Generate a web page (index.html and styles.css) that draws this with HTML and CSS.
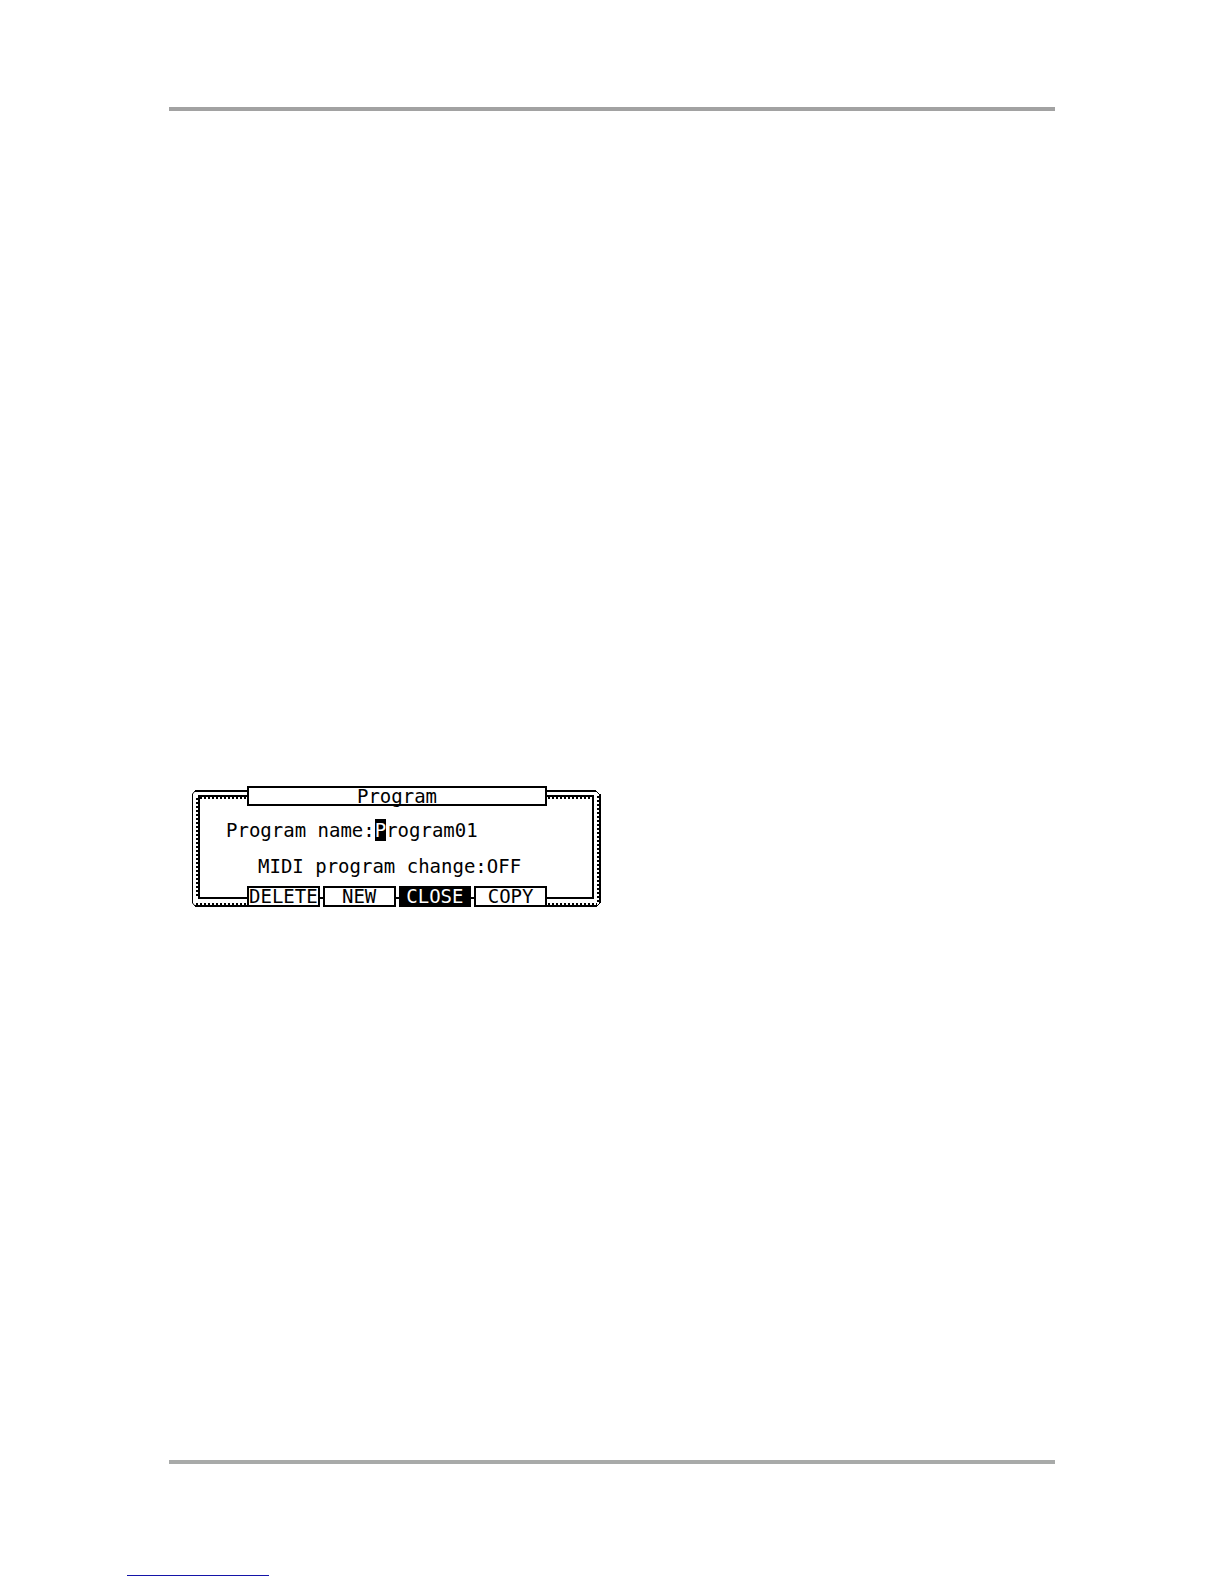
FILE: index.html
```
<!DOCTYPE html>
<html lang="en">
<head>
    <meta charset="UTF-8">
    <meta name="viewport" content="width=device-width, initial-scale=1.0">
    <title>Program</title>
    <link rel="stylesheet" href="styles.css">
</head>
<body>
    <div class="page">
        <main class="sheet">
            <form class="screen">
                <!-- double LCD frame with a toothed shadow -->
                <svg class="frame" viewBox="0 0 409 121" aria-hidden="true">
                    <path class="thin" d="M3 120L0.5 117V8L3 5M404 5L408 9M408 117L405 120"/>
                    <path class="line" d="M3 5H404M408 8V117M405 120H3"/>
                    <path class="line" d="M7 112V10H401V112Z"/>
                    <path class="teeth" d="M5 12V112M8 12H400M406 10V117M4 118H405"/>
                </svg>
                <div class="content">
                    <h1 class="title">Program</h1>
                    <div class="fields">
                        <div class="field">
                            <label for="program-name">Program name:</label>
                            <input type="text" id="program-name" value="Program01" maxlength="16" spellcheck="false" autocomplete="off">
                        </div>
                        <div class="field midi">
                            <label for="program-change">MIDI program change:</label>
                            <select id="program-change">
                                <option>OFF</option>
                            </select>
                        </div>
                    </div>
                    <div class="buttons">
                        <button type="button">DELETE</button>
                        <button type="button">NEW</button>
                        <button type="button" class="active">CLOSE</button>
                        <button type="button">COPY</button>
                    </div>
                </div>
            </form>
        </main>
        <footer class="footer">
            <div class="footer-line"></div>
        </footer>
    </div>

    <script>
        // Put the block cursor on the first character of the name
        const nameInput = document.getElementById('program-name');
        nameInput.focus();
        nameInput.setSelectionRange(0, 1);
    </script>
</body>
</html>
```
FILE: styles.css
```
* {
    box-sizing: border-box;
}
body {
    margin: 0;
    background-color: white;
    color: black;
    font-family: "DejaVu Sans Mono", monospace;
    font-size: 19px;
    line-height: 22px;
}
.page {
    display: flex;
    flex-direction: column;
    min-height: 100vh;
    padding-top: 107px;
}
.sheet {
    flex: 1;
    margin: 0 169px;
    padding: 675px 23px 0;
    border-top: 4px solid #a2a2a2;
    border-bottom: 4px solid #a8aaa9;
}
.screen {
    display: grid;
    grid-template-columns: minmax(0, 1fr);
    max-width: 409px;
}
.frame,
.content {
    grid-area: 1 / 1;
}
.frame {
    width: 100%;
    fill: none;
    stroke: black;
}
.thin {
    stroke-width: 1;
}
.line {
    stroke-width: 2;
}
.teeth {
    stroke-width: 2;
    stroke-dasharray: 2 2;
}
.content {
    display: flex;
    flex-direction: column;
    padding: 0 54px 0 55px;
}
.title {
    margin: 0;
    height: 20px;
    border: 2px solid black;
    background-color: white;
    font-size: 19px;
    font-weight: normal;
    line-height: 16px;
    text-align: center;
}
.fields {
    flex: 1;
    display: flex;
    flex-direction: column;
    gap: 14px;
    margin: 0 -21px;
    padding-top: 13px;
}
.field {
    display: flex;
    white-space: nowrap;
}
.midi {
    padding-left: 32px;
}
input,
select {
    flex: 1;
    min-width: 0;
    height: 22px;
    margin: 0;
    padding: 0;
    border: none;
    outline: none;
    appearance: none;
    background: none;
    color: inherit;
    font: inherit;
}
input::selection {
    background-color: black;
    color: white;
}
.buttons {
    display: grid;
    grid-template-columns: repeat(4, minmax(0, 1fr));
    gap: 3px;
    /* frame line showing between the keys */
    background: linear-gradient(black, black) 0 11px / 100% 2px no-repeat white;
}
button {
    display: flex;
    justify-content: center;
    height: 21px;
    padding: 0;
    border: 2px solid black;
    border-radius: 0;
    background-color: white;
    color: inherit;
    font: inherit;
    line-height: 17px;
    cursor: pointer;
}
.active {
    background-color: black;
    border-color: black;
    color: white;
}
.footer {
    height: 120px;
    padding: 111px 127px 0;
}
.footer-line {
    width: 142px;
    height: 1px;
    background-color: #1414a8;
}
```
